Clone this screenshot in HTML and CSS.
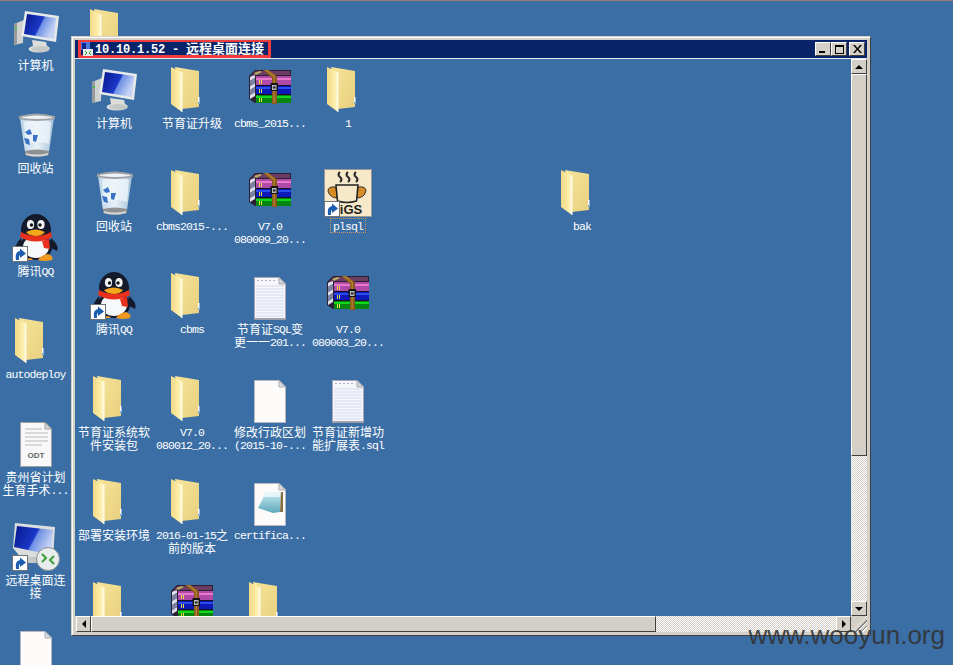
FILE: index.html
```html
<!DOCTYPE html>
<html lang="zh-CN">

<head>
  <meta charset="UTF-8" />
  <title>10.10.1.52 - 远程桌面连接</title>
  <link rel="stylesheet" href="styles.css">
</head>

<body>
  <svg class="sprite" width="0" height="0" aria-hidden="true">
    <defs>
      <linearGradient id="gFolder" x1="0" y1="0" x2="1" y2="1">
        <stop offset="0" stop-color="#f6e49a" />
        <stop offset="1" stop-color="#e8d07e" />
      </linearGradient>
      <linearGradient id="gFlap" x1="0" y1="0" x2="1" y2="0">
        <stop offset="0" stop-color="#f2d984" />
        <stop offset=".7" stop-color="#fdeeaa" />
        <stop offset="1" stop-color="#fff8d8" />
      </linearGradient>
      <linearGradient id="gScreen" x1="0" y1="0" x2="1" y2=".4">
        <stop offset="0" stop-color="#08188c" />
        <stop offset=".58" stop-color="#1a38c8" />
        <stop offset=".62" stop-color="#6c8ee4" />
        <stop offset="1" stop-color="#c4d2f4" />
      </linearGradient>
      <linearGradient id="gBin" x1="0" y1="0" x2="1" y2="0">
        <stop offset="0" stop-color="#bcd4e8" />
        <stop offset=".5" stop-color="#e8f2f8" />
        <stop offset="1" stop-color="#a4c0d8" />
      </linearGradient>
      <linearGradient id="gNote" x1="0" y1="0" x2="0" y2="1">
        <stop offset="0" stop-color="#c8ecf0" />
        <stop offset="1" stop-color="#5ea8bc" />
      </linearGradient>
    </defs>

    <symbol id="folder" viewBox="0 0 48 48">
      <path d="M7 1L31 5V41L14 43Z" fill="url(#gFolder)" />
      <path d="M3 1L14 6.500V46L3 38Z" fill="url(#gFlap)" />
      <path d="M14 6.500V46" stroke="#fffdf0" fill="none" />
      <path d="M30 31h1.500v7h-1.500z" fill="#fff" />
      <path d="M30 36h1.500v2h-1.500z" fill="#6aa8e0" />
    </symbol>

    <symbol id="rar" viewBox="0 0 48 48">
      <path d="M3 10L9 4H45V10H10V37H9L3 33Z" fill="#2b2030" />
      <path d="M4 11L9 8V12L4 15ZM4 20L9 17V21L4 24ZM4 29L9 26V30L4 33Z" fill="#dcdcec" />
      <path d="M4 15L9 12V17L4 20ZM4 24L9 21V26L4 29Z" fill="#7c82a4" />
      <path d="M5 10L10 5H44L44 9H10Z" fill="#6c3c64" />
      <path d="M8 7L14 5L16 6L10 9Z" fill="#b8b060" />
      <path d="M10 10H45V19H10Z" fill="#b04aa8" />
      <path d="M10 12H45V14H10Z" fill="#e878c8" />
      <path d="M10 20H45V28H10Z" fill="#0c18b8" />
      <path d="M10 21H45V23H10Z" fill="#2c4cf0" />
      <path d="M10 29H45V37H10Z" fill="#06860e" />
      <path d="M10 30H45V32H10Z" fill="#10d820" />
      <path d="M10 19h35v1H10zM10 28h35v1H10z" fill="#141420" />
      <path d="M13 14h1v4h-1zM15 14h1v4h-1zM13 23h1v4h-1zM15 23h1v4h-1zM13 32h1v4h-1zM15 32h1v4h-1z" fill="#e8e040" />
      <path d="M17 4H22L31 10V38H26V12Z" fill="#8a5a1c" />
      <path d="M19 4L22 4L29 10L29 37H27.500V11Z" fill="#b07c30" />
      <path d="M24.500 17H32V25H24.500Z" fill="#141414" />
      <path d="M26 19H30.500V24H26Z" fill="#b8b8b8" />
      <path d="M27 20.500h2.500v2H27z" fill="#222" />
    </symbol>

    <symbol id="computer" viewBox="0 0 48 48">
      <path d="M2 16L12 12L11 35L2 37Z" fill="#d0d2d0" />
      <path d="M2 16L5 15V36.500L2 37Z" fill="#989b99" />
      <path d="M3 20h2v2H3z" fill="#3cc048" />
      <path d="M20 32L34 34L35 38Q40 40 36 43Q26 46 18 43Q14 40 21 38Z" fill="#dcdedc" />
      <ellipse cx="28" cy="41" rx="9" ry="3" fill="#c6c8c6" />
      <path d="M13 3L47 8L44 34L9 28Z" fill="#e8eaea" />
      <path d="M15 6L44 10L42 31L12 26Z" fill="url(#gScreen)" />
    </symbol>

    <symbol id="bin" viewBox="0 0 48 48">
      <path d="M8 7H42L37 41H13Z" fill="url(#gBin)" />
      <path d="M12 11Q25 4 39 11L37 33Q24 28 14 35Z" fill="#eef5fa" opacity=".8" />
      <path d="M13 21L18 18L20 23L16 24ZM21 24L26 24L24 31L21 30ZM12 27L17 28L18 34L14 33Z" fill="#3a72c8" />
      <path d="M7 5Q25 0 43 5V8Q25 12 7 8Z" fill="#9ea2a6" />
      <path d="M10 6Q25 3 40 6V7Q25 9 10 7Z" fill="#eef2f4" />
      <path d="M13 40Q25 37 37 40V44Q25 48 13 44Z" fill="#8e9092" />
      <path d="M14 42Q25 45 36 42V44Q25 47 14 44Z" fill="#d4d6d8" />
    </symbol>

    <symbol id="qq" viewBox="0 0 48 48">
      <path d="M9 24Q1 33 4 37L11 33ZM39 24Q48 32 45 37L37 33Z" fill="#141a2c" />
      <ellipse cx="24" cy="16" rx="15" ry="16" fill="#141a2c" />
      <ellipse cx="24" cy="33" rx="16" ry="13" fill="#141a2c" />
      <ellipse cx="24" cy="33" rx="13" ry="11" fill="#f6f8fa" />
      <ellipse cx="18.500" cy="10.500" rx="3.600" ry="4.500" fill="#f4f4f4" />
      <ellipse cx="29" cy="10.500" rx="3.600" ry="4.500" fill="#f4f4f4" />
      <circle cx="19.500" cy="11" r="1.700" fill="#111" />
      <circle cx="28" cy="11" r="1.700" fill="#111" />
      <path d="M14 18Q24 13 33 18Q30 22 24 22Q17 22 14 18Z" fill="#f6a81c" />
      <path d="M8 23Q24 32 40 23L39 18Q24 26 9 18Z" fill="#e8301c" />
      <path d="M30 27L37 25L38 35L32 34Z" fill="#e8301c" />
      <path d="M26 46Q29 41 36 40Q42 42 40 46Q32 48 26 46ZM14 46Q18 42 21 46H14Z" fill="#f09820" />
    </symbol>

    <symbol id="doc" viewBox="0 0 48 48">
      <path d="M8.500 5.500H33L39.500 12V47.500H8.500Z" fill="#f6f6fc" stroke="#a8a8b0" />
      <path d="M33 5.500V12H39.500Z" fill="#d4d4dc" stroke="#a8a8b0" />
      <path d="M11 8h2v1h-2zM15 8h2v1h-2zM19 8h2v1h-2zM23 8h2v1h-2zM27 8h2v1h-2z" fill="#b4b4bc" />
      <path d="M10 14H38M10 17H38M10 20H38M10 23H38M10 26H38M10 29H38M10 32H38M10 35H38M10 38H38M10 41H38M10 44H38" stroke="#d4dcf0" fill="none" />
      <path d="M8 46h32v2H8z" fill="#a0a0a8" />
    </symbol>

    <symbol id="blank" viewBox="0 0 48 48">
      <path d="M8.500 5.500H33L39.500 12V47.500H8.500Z" fill="#fdfafa" stroke="#b8b8be" />
      <path d="M33 5.500V12H39.500Z" fill="#d8d8de" stroke="#b0b0b8" />
    </symbol>

    <symbol id="cert" viewBox="0 0 48 48">
      <path d="M8.500 5.500H33L39.500 12V47.500H8.500Z" fill="#fdfafa" stroke="#b8b8be" />
      <path d="M33 5.500V12H39.500Z" fill="#d8d8de" stroke="#b0b0b8" />
      <path d="M20 14L35 14L34 34L27 35L12 30Z" fill="url(#gNote)" />
      <path d="M20 14L35 14L34 19L17 19Z" fill="#e4f6f8" />
      <path d="M35 14h2v20h-3z" fill="#8a7040" />
    </symbol>

    <symbol id="odt" viewBox="0 0 48 48">
      <path d="M8.500 2.500H33L39.500 9V46.500H8.500Z" fill="#f8f8f8" stroke="#a0a0a0" />
      <path d="M33 2.500V9H39.500Z" fill="#d8d8d8" stroke="#a0a0a0" />
      <path d="M13 9H30M13 13H36M13 17H36M13 21H36M13 25H30" stroke="#b8b8b8" fill="none" />
    </symbol>

    <symbol id="plsql" viewBox="0 0 48 48">
      <rect x=".5" y=".5" width="47" height="47" fill="#f6e8c8" stroke="#9a9a90" />
      <path d="M16 3Q13 5.500 16 8T16 13M24 3Q21 5.500 24 8T24 13M32 3Q29 5.500 32 8T32 13" fill="none" stroke="#222" stroke-width="2" />
      <path d="M12 18Q4 17 4 22Q6 29 13 29ZM34 18Q42 17 42 22Q40 29 33 29Z" fill="#d88c28" stroke="#333" />
      <path d="M12 16H34L32.500 32Q23 35 13.500 32Z" fill="#f6e8c8" stroke="#222" stroke-width="1.500" />
    </symbol>

    <symbol id="rdp" viewBox="0 0 48 48">
      <path d="M3 0L43 4L41 37L10 36L1 25Z" fill="#dcdede" />
      <path d="M5 3L41 7L39 32L2 24Z" fill="url(#gScreen)" />
      <path d="M14 34H32V40H14Z" fill="#c6c8c8" />
      <circle cx="36" cy="36" r="11.500" fill="#e8ecec" stroke="#8a8e8e" />
      <path d="M30 31L34 35L30 39M42 33L38 37L42 41" fill="none" stroke="#38a038" stroke-width="2" />
    </symbol>

    <symbol id="arrow" viewBox="0 0 16 16">
      <rect x=".5" y=".5" width="15" height="15" fill="#fff" stroke="#6f7478" />
      <path d="M4 14Q2.500 6 8 5V2.500L14 7.500L8 12V9Q6.500 9.500 7 14Z" fill="#1c5cb0" />
    </symbol>
  </svg>

  <div class="topline"></div>

  <div class="desktop">
    <div class="icon"><svg><use href="#computer" /></svg><div class="label">计算机</div></div>
    <div class="icon"><svg><use href="#bin" /></svg><div class="label">回收站</div></div>
    <div class="icon link"><svg><use href="#qq" /></svg><svg class="shortcut"><use href="#arrow" /></svg><div class="label">腾讯<span class="en">QQ</span></div></div>
    <div class="icon"><svg><use href="#folder" /></svg><div class="label"><span class="en">autodeploy</span></div></div>
    <div class="icon"><svg><use href="#odt" /><text x="24" y="38" text-anchor="middle" class="odt-text">ODT</text></svg><div class="label">贵州省计划<br>生育手术<span class="en">...</span></div></div>
    <div class="icon link"><svg><use href="#rdp" /></svg><svg class="shortcut"><use href="#arrow" /></svg><div class="label">远程桌面连<br>接</div></div>
    <div class="icon"><svg><use href="#blank" /></svg></div>
    <div class="icon"><svg><use href="#folder" /></svg></div>
  </div>

  <div class="window">
    <div class="titlebar">
      <div class="title-mark">
        <svg class="title-icon" viewBox="0 0 12 14">
          <path d="M0 0H9V8H0Z" fill="#5078d8" />
          <path d="M1 1H5V7H1Z" fill="#0c2090" />
          <path d="M2 7H12V14H2Z" fill="#e8ecec" />
          <path d="M4 9L6 11L4 13M10 9L8 11L10 13" fill="none" stroke="#28a028" />
        </svg>
        <span class="title-text"><span class="title-en">10.10.1.52 - </span>远程桌面连接</span>
      </div>
      <div class="title-buttons">
        <button class="caption"><span class="glyph-min"></span></button>
        <button class="caption"><span class="glyph-max"></span></button>
        <button class="caption close">
          <svg viewBox="0 0 9 8" width="9" height="8"><path d="M0 0h2l2.500 3L7 0h2L5.500 4 9 8H7L4.500 5 2 8H0l3.500-4Z" fill="#000" /></svg>
        </button>
      </div>
    </div>

    <div class="window-body">
      <div class="client">
        <div class="icon"><svg><use href="#computer" /></svg><div class="label">计算机</div></div>
        <div class="icon"><svg><use href="#folder" /></svg><div class="label">节育证升级</div></div>
        <div class="icon"><svg><use href="#rar" /></svg><div class="label"><span class="en">cbms_2015...</span></div></div>
        <div class="icon"><svg><use href="#folder" /></svg><div class="label"><span class="en">1</span></div></div>

        <div class="icon row-start"><svg><use href="#bin" /></svg><div class="label">回收站</div></div>
        <div class="icon"><svg><use href="#folder" /></svg><div class="label"><span class="en">cbms2015-...</span></div></div>
        <div class="icon"><svg><use href="#rar" /></svg><div class="label"><span class="en">V7.0<br>080009_20...</span></div></div>
        <div class="icon link"><svg><use href="#plsql" /><text x="27" y="45" text-anchor="middle" class="plsql-text">iGS</text></svg><svg class="shortcut"><use href="#arrow" /></svg><div class="label selected"><span class="en">plsql</span></div></div>
        <div class="icon col-seven"><svg><use href="#folder" /></svg><div class="label"><span class="en">bak</span></div></div>

        <div class="icon link row-start"><svg><use href="#qq" /></svg><svg class="shortcut"><use href="#arrow" /></svg><div class="label">腾讯<span class="en">QQ</span></div></div>
        <div class="icon"><svg><use href="#folder" /></svg><div class="label"><span class="en">cbms</span></div></div>
        <div class="icon"><svg><use href="#doc" /></svg><div class="label">节育证<span class="en">SQL</span>变<br>更一一<span class="en">201...</span></div></div>
        <div class="icon"><svg><use href="#rar" /></svg><div class="label"><span class="en">V7.0<br>080003_20...</span></div></div>

        <div class="icon row-start"><svg><use href="#folder" /></svg><div class="label">节育证系统软<br>件安装包</div></div>
        <div class="icon"><svg><use href="#folder" /></svg><div class="label"><span class="en">V7.0<br>080012_20...</span></div></div>
        <div class="icon"><svg><use href="#blank" /></svg><div class="label">修改行政区划<br><span class="en">(2015-10-...</span></div></div>
        <div class="icon"><svg><use href="#doc" /></svg><div class="label">节育证新增功<br>能扩展表<span class="en">.sql</span></div></div>

        <div class="icon row-start"><svg><use href="#folder" /></svg><div class="label">部署安装环境</div></div>
        <div class="icon"><svg><use href="#folder" /></svg><div class="label"><span class="en">2016-01-15</span>之<br>前的版本</div></div>
        <div class="icon"><svg><use href="#cert" /></svg><div class="label"><span class="en">certifica...</span></div></div>

        <div class="icon row-start"><svg><use href="#folder" /></svg></div>
        <div class="icon"><svg><use href="#rar" /></svg></div>
        <div class="icon"><svg><use href="#folder" /></svg></div>
      </div>

      <div class="vscroll">
        <button class="sbtn"><span class="tri tri-up"></span></button>
        <div class="vthumb"></div>
        <div class="track"></div>
        <button class="sbtn"><span class="tri tri-down"></span></button>
      </div>

      <div class="hscroll">
        <button class="sbtn"><span class="tri tri-left"></span></button>
        <div class="hthumb"></div>
        <div class="track"></div>
        <button class="sbtn"><span class="tri tri-right"></span></button>
      </div>

      <div class="grip"></div>
    </div>
  </div>

  <div class="watermark">www.wooyun.org</div>
</body>

</html>
```

FILE: styles.css
```css
html,
body {
  height: 100%;
}

body {
  margin: 0;
  background: #3a6ea5;
  overflow: hidden;
  position: relative;
  font-family: "Noto Sans CJK SC", "Liberation Sans", sans-serif;
  color: #fff;
}

.sprite {
  position: absolute;
}

.topline {
  height: 1px;
  background: #a07878;
}

.desktop {
  display: grid;
  grid-auto-flow: column;
  grid-template-rows: repeat(7, 103px);
  grid-auto-columns: 75px;
  box-sizing: border-box;
  height: 664px;
  overflow: hidden;
  padding-top: 7px;
  margin-left: -2px;
}

.icon {
  display: flex;
  flex-direction: column;
  align-items: center;
  position: relative;
}

.icon > svg {
  width: 48px;
  height: 48px;
  flex: none;
}

.icon > .shortcut {
  position: absolute;
  width: 16px;
  height: 16px;
  top: 32px;
  left: calc(50% - 24px);
}

.label {
  margin-top: 2px;
  font-size: 12px;
  line-height: 13px;
  text-align: center;
  white-space: nowrap;
}

.en {
  font-family: "Liberation Mono", monospace;
  font-size: 11.5px;
  line-height: 0;
  letter-spacing: -.9px;
  vertical-align: 1px;
}

.selected {
  outline: 1px dotted #c89858;
  padding: 0 2px;
}

.odt-text {
  font: bold 8px "Liberation Sans", sans-serif;
  fill: #666;
}

.plsql-text {
  font: bold 13px "Liberation Sans", sans-serif;
  fill: #222;
}

.window {
  position: absolute;
  left: 71px;
  top: 36px;
  width: 800px;
  height: 600px;
  box-sizing: border-box;
  display: flex;
  flex-direction: column;
  padding: 3px;
  background: #d4d0c8;
  border: 1px solid;
  border-color: #d4d0c8 #404040 #404040 #d4d0c8;
  box-shadow: inset 1px 1px 0 #fff;
}

.titlebar {
  height: 18px;
  flex: none;
  display: flex;
  align-items: center;
  background: #0a246a;
}

.title-mark {
  display: flex;
  align-items: center;
  box-sizing: border-box;
  width: 193px;
  height: 18px;
  margin-left: 3px;
  border: 3px solid #f03c3c;
  border-top-width: 2px;
}

.title-icon {
  width: 12px;
  height: 14px;
  flex: none;
}

.title-text {
  margin-left: 2px;
  font-size: 13px;
  font-weight: bold;
  line-height: 14px;
  white-space: pre;
}

.title-en {
  font-family: "Liberation Mono", monospace;
  font-size: 12px;
  letter-spacing: -.2px;
}

.title-buttons {
  margin-left: auto;
  margin-right: 2px;
  display: flex;
}

.caption {
  width: 16px;
  height: 14px;
  padding: 0;
  display: flex;
  align-items: center;
  justify-content: center;
  background: #d4d0c8;
  border: 1px solid;
  border-color: #fff #404040 #404040 #fff;
}

.close {
  margin-left: 2px;
}

.glyph-min {
  width: 6px;
  height: 2px;
  margin-top: 6px;
  margin-right: 2px;
  background: #000;
}

.glyph-max {
  width: 7px;
  height: 6px;
  border: 1px solid #000;
  border-top-width: 2px;
}

.window-body {
  flex: 1;
  min-height: 0;
  margin-top: 1px;
  display: grid;
  grid-template-columns: 1fr 16px;
  grid-template-rows: 1fr 16px;
  box-shadow: 0 -1px 0 #e8e8e8;
}

.client {
  background: #3a6ea5;
  overflow: hidden;
  display: grid;
  grid-template-columns: repeat(8, 78px);
  grid-auto-rows: 103px;
  padding-top: 7px;
  min-height: 0;
}

.row-start {
  grid-column: 1;
}

.col-seven {
  grid-column: 7;
}

.vscroll {
  display: flex;
  flex-direction: column;
  min-height: 0;
}

.hscroll {
  display: flex;
  margin-left: 1px;
}

.sbtn {
  width: 16px;
  height: 16px;
  flex: none;
  padding: 0;
  display: flex;
  align-items: center;
  justify-content: center;
  background: #d4d0c8;
  border: 1px solid;
  border-color: #fff #404040 #404040 #fff;
}

.hscroll .sbtn {
  width: 15px;
}

.vscroll .sbtn {
  height: 15px;
}

.vthumb {
  height: 382px;
  flex: none;
  box-sizing: border-box;
  background: #d4d0c8;
  border: 1px solid;
  border-color: #fff #404040 #404040 #fff;
}

.hthumb {
  width: 565px;
  flex: none;
  box-sizing: border-box;
  background: #d4d0c8;
  border: 1px solid;
  border-color: #fff #404040 #404040 #fff;
}

.track {
  flex: 1;
  background: repeating-conic-gradient(#d4d0c8 0 25%, #fff 0 50%) 0 0 / 2px 2px;
}

.tri {
  width: 0;
  height: 0;
  border: 4px solid transparent;
}

.tri-up {
  border-bottom-color: #000;
  border-top-width: 0;
}

.tri-down {
  border-top-color: #000;
  border-bottom-width: 0;
}

.tri-left {
  border-right-color: #000;
  border-left-width: 0;
}

.tri-right {
  border-left-color: #000;
  border-right-width: 0;
}

.grip {
  background:
    repeating-linear-gradient(135deg, transparent 0 2px, #808080 2px 3px, #fff 3px 4px);
  clip-path: polygon(100% 0, 100% 100%, 0 100%);
}

.watermark {
  position: absolute;
  right: 8px;
  top: 620px;
  font-family: "Liberation Sans", sans-serif;
  font-size: 26px;
  line-height: 30px;
  color: rgba(50, 50, 50, .9);
}
```
